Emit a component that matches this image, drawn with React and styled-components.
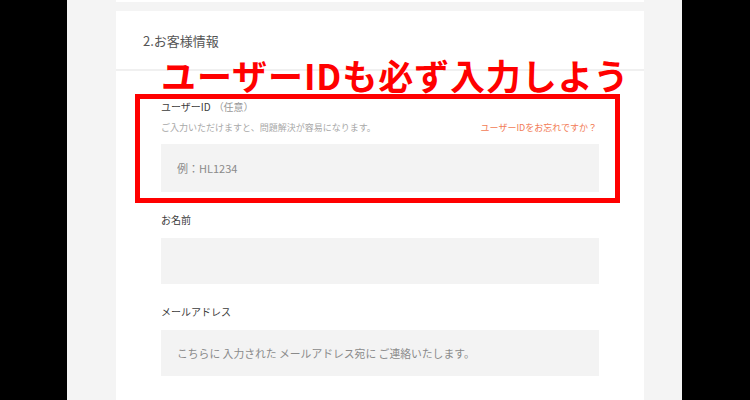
import React from "react";
import styled, { createGlobalStyle } from "styled-components";

const GlobalStyle = createGlobalStyle`
  html, body {
    margin: 0;
    padding: 0;
    background: #000;
  }
  body {
    font-family: "Noto Sans CJK JP", "Noto Sans", sans-serif;
  }
`;

const Page = styled.div`
  width: 750px;
  height: 400px;
  overflow: hidden;
  display: flex;
  background: #000;
`;

const Column = styled.main`
  margin-left: 67px;
  width: 615px;
  height: 400px;
  background: #f4f4f4;
  padding: 0 38px 0 49px;
  box-sizing: border-box;
  display: flex;
  flex-direction: column;
  gap: 9px;
`;

const PrevCard = styled.div`
  height: 2px;
  background: #fff;
`;

const Card = styled.section`
  position: relative;
  background: #fff;
  flex: 1;
`;

const CardHeader = styled.h2`
  margin: 0;
  height: 58px;
  display: flex;
  align-items: center;
  padding-left: 27px;
  font-size: 13px;
  font-weight: 400;
  color: #555;
  border-bottom: 2px solid #f0f0f0;
`;

const CardBody = styled.div`
  padding: 29px 45px 0;
`;

const Field = styled.div`
  & + & {
    margin-top: 21px;
  }
`;

const Label = styled.div`
  font-size: 10px;
  line-height: 14px;
  color: #3c3c3c;
  margin-bottom: ${(p) => (p.$tight ? "0" : "11px")};
`;

const Optional = styled.span`
  color: #999;
  margin-left: 3px;
`;

const HelpRow = styled.div`
  display: flex;
  justify-content: space-between;
  align-items: center;
  margin: 7px 0 9px;
  font-size: 9px;
  line-height: 14px;
`;

const Help = styled.span`
  color: #a8a8a8;
`;

const ForgotLink = styled.a`
  color: #f27b55;
  text-decoration: none;
  margin-right: 2px;
`;

const TextInput = styled.input`
  display: block;
  width: 100%;
  box-sizing: border-box;
  height: ${(p) => p.$h || 46}px;
  border: none;
  outline: none;
  background: #f3f3f3;
  padding: 0 16px;
  font-family: inherit;
  font-size: ${(p) => p.$fs || 10.8}px;
  color: #333;

  &::placeholder {
    color: #8a8a8a;
  }
`;

const Callout = styled.div`
  position: absolute;
  left: 45px;
  top: 46px;
  font-size: 35px;
  line-height: 1;
  font-weight: 700;
  color: #ff0000;
  white-space: nowrap;
  letter-spacing: 0.9px;
`;

const Highlight = styled.div`
  position: absolute;
  left: 19px;
  top: 83px;
  width: 485px;
  height: 109px;
  box-sizing: border-box;
  border: 5px solid #ff0000;
  pointer-events: none;
`;

export default function App() {
  return (
    <>
      <GlobalStyle />
      <Page>
        <Column>
          <PrevCard />
          <Card>
            <CardHeader>2.お客様情報</CardHeader>
            <CardBody>
              <Field>
                <Label $tight>
                  ユーザーID<Optional>（任意）</Optional>
                </Label>
                <HelpRow>
                  <Help>ご入力いただけますと、問題解決が容易になります。</Help>
                  <ForgotLink href="#">ユーザーIDをお忘れですか？</ForgotLink>
                </HelpRow>
                <TextInput $h={48} $fs={11} placeholder="例：HL1234" />
              </Field>
              <Field>
                <Label>お名前</Label>
                <TextInput />
              </Field>
              <Field>
                <Label>メールアドレス</Label>
                <TextInput placeholder="こちらに 入力された メールアドレス宛に ご連絡いたします。" />
              </Field>
            </CardBody>
            <Callout>ユーザーIDも必ず入力しよう</Callout>
            <Highlight />
          </Card>
        </Column>
      </Page>
    </>
  );
}
